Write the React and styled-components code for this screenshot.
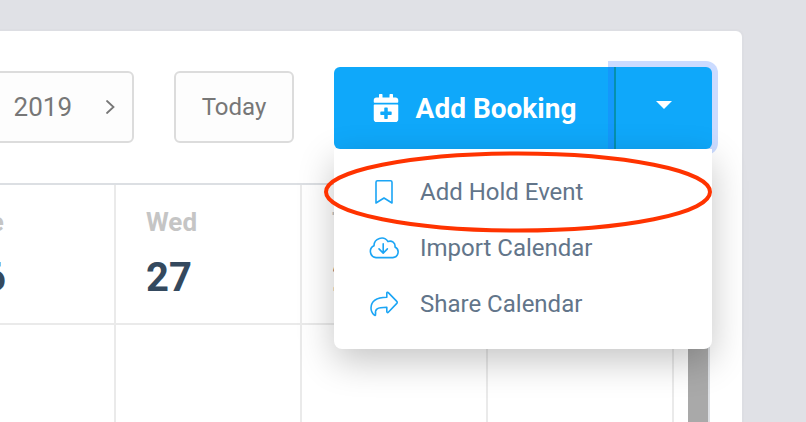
import React from 'react'
import styled, { createGlobalStyle } from 'styled-components'
import { FaCalendarPlus } from 'react-icons/fa'

const GlobalStyle = createGlobalStyle`
	* {
		box-sizing: border-box;
	}

	body {
		margin: 0;
		background: #e0e1e6;
		font-family: Roboto, "Liberation Sans", sans-serif;
	}

	button {
		margin: 0;
		padding: 0;
		border: 0;
		background: none;
		font: inherit;
		color: inherit;
		cursor: pointer;
	}
`

const Page = styled.div`
	height: 100vh;
	padding: 31px 64px 0 0;
	overflow: hidden;
`

const Panel = styled.main`
	margin-left: -70px;
	background: #fff;
	border-radius: 0 6px 0 0;
	box-shadow: 0 0 0 2px #dddee3;
`

const Toolbar = styled.header`
	display: flex;
	align-items: flex-start;
	gap: 40px;
	padding: 36px 30px 34px 0;
`

const box = `
	height: 72px;
	margin-top: 4px;
	border: 2px solid #dcdcdc;
	border-radius: 6px;
	background: #fdfdfd;
	color: #777;
`

const DatePicker = styled.div`
	${box}
	flex: 1;
	display: flex;
	align-items: center;
	justify-content: flex-end;
	gap: 32px;
	padding-right: 16px;
	font-size: 26px;
`

const IconButton = styled.button`
	display: flex;
`

const TodayButton = styled.button`
	&& {
		${box}
		width: 120px;
		font-size: 24px;
	}
`

const SplitButton = styled.div`
	position: relative;
	display: flex;
	height: 82px;
	color: #fff;
`

const AddButton = styled.button`
	&& {
		display: flex;
		align-items: center;
		justify-content: center;
		gap: 16px;
		width: 280px;
		border-radius: 6px 0 0 6px;
		background: #0fa8fa;
		color: #fff;
		font-size: 28px;
		font-weight: 700;
	}
`

const ToggleButton = styled.button`
	&& {
		display: flex;
		align-items: center;
		justify-content: center;
		width: 98px;
		border-left: 2px solid #0590ae;
		border-radius: 0 6px 6px 0;
		background: #0fa8fa;
		box-shadow: 0 0 0 6px rgba(38, 104, 255, .24);
		outline: 0;
	}
`

const Caret = styled.span`
	margin-bottom: 6px;
	border: 8px solid transparent;
	border-top-color: #fff;
	border-bottom: 0;
`

const Menu = styled.ul`
	position: absolute;
	top: 100%;
	left: 0;
	right: 0;
	margin: 0;
	padding: 15px 0 17px;
	list-style: none;
	background: #fff;
	border-radius: 0 0 8px 8px;
	box-shadow: 0 12px 36px rgba(0, 0, 0, .23);
`

const MenuButton = styled.button`
	&& {
		display: flex;
		align-items: center;
		gap: 20px;
		width: 100%;
		height: 56px;
		padding-left: 34px;
		color: #62758a;
		font-size: 24px;
	}
`

const MenuIcon = styled.svg`
	width: 32px;
	height: 32px;
	fill: none;
	stroke: #1ba5f5;
	stroke-width: 1.6;
	stroke-linecap: round;
	stroke-linejoin: round;
`

const Highlight = styled.svg`
	position: absolute;
	top: 84px;
	left: -10px;
	width: 388px;
	height: 82px;
	overflow: visible;
	pointer-events: none;
`

const Calendar = styled.section`
	display: flex;
	gap: 14px;
	margin-right: 32px;
	border-top: 2px solid #dcdfe3;
	border-right: 2px solid #dcdfe3;
`

const Scrollbar = styled.div`
	flex: none;
	width: 20px;
	background: #a9a9a9;
`

const Table = styled.table`
	width: 100%;
	table-layout: fixed;
	border-spacing: 0;
`

const Th = styled.th`
	height: 140px;
	padding: 0 0 0 30px;
	border-right: 2px solid #eaeaea;
	border-bottom: 2px solid #eaeaea;
	text-align: left;
`

const DayName = styled.div`
	color: #c5c5c5;
	font-size: 26px;
	line-height: 32px;
`

const DayNumber = styled.div`
	margin-top: 16px;
	color: #34495e;
	font-size: 40px;
	line-height: 48px;
`

const Td = styled.td`
	height: 240px;
	border-right: 2px solid #eaeaea;
`

const days = [
	{ name: 'Tue', number: 26 },
	{ name: 'Wed', number: 27 },
	{ name: 'Thu', number: 28 },
	{ name: '', number: '' },
]

const menuItems = [
	{
		label: 'Add Hold Event',
		icon: <path d="M8 27V6.3A1.5 1.5 0 0 1 9.5 4.8h13A1.5 1.5 0 0 1 24 6.3V27l-8-5z" />,
	},
	{
		label: 'Import Calendar',
		icon: (
			<>
				<path d="M8 25.6A6.2 6.2 0 0 1 6 13.8A7.6 7.6 0 0 1 20 9.6A5 5 0 0 1 27 15A5.6 5.6 0 0 1 24.8 25.6z" />
				<path d="M15.2 11.7V21M11 16.9l4.2 4.2l4.2-4.2" />
			</>
		),
	},
	{
		label: 'Share Calendar',
		icon: <path d="M18.8 9.2C9 9.4 3 12 3 20c0 3 1.4 5.5 3.4 7.2c.6.5 1.4 0 1.2-.7C6.6 21 9 19.3 18.8 19.2v4.4c0 1 .9 1.3 1.5.6l8.5-8.8a1.4 1.4 0 0 0 0-2l-8.5-8.8c-.6-.6-1.5-.4-1.5.6z" />,
	},
]

const App = () => (
	<>
		<GlobalStyle />
		<Page>
			<Panel>
				<Toolbar>
					<DatePicker>
						<span>2019</span>
						<IconButton aria-label="Next">
							<svg width="12" height="16" viewBox="0 0 12 16" fill="none" stroke="#777" strokeWidth="1.8" strokeLinecap="round">
								<path d="M3 2l6.5 6l-6.5 6" />
							</svg>
						</IconButton>
					</DatePicker>
					<TodayButton>Today</TodayButton>
					<SplitButton>
						<AddButton>
							<FaCalendarPlus size={28} />
							Add Booking
						</AddButton>
						<ToggleButton aria-label="More actions" aria-expanded="true">
							<Caret />
						</ToggleButton>
						<Menu>
							{menuItems.map(({ label, icon }) => (
								<li key={label}>
									<MenuButton>
										<MenuIcon viewBox="0 0 32 32">{icon}</MenuIcon>
										{label}
									</MenuButton>
								</li>
							))}
						</Menu>
						<Highlight viewBox="0 0 388 82">
							<ellipse cx="194" cy="41" rx="192" ry="38.5" fill="none" stroke="#ff3300" strokeWidth="4" />
						</Highlight>
					</SplitButton>
				</Toolbar>
				<Calendar>
					<Table>
						<thead>
							<tr>
								{days.map(({ name, number }) => (
									<Th key={name}>
										<DayName>{name}</DayName>
										<DayNumber>{number}</DayNumber>
									</Th>
								))}
							</tr>
						</thead>
						<tbody>
							<tr>
								{days.map(({ name }) => <Td key={name} />)}
							</tr>
						</tbody>
					</Table>
					<Scrollbar />
				</Calendar>
			</Panel>
		</Page>
	</>
)

export default App
